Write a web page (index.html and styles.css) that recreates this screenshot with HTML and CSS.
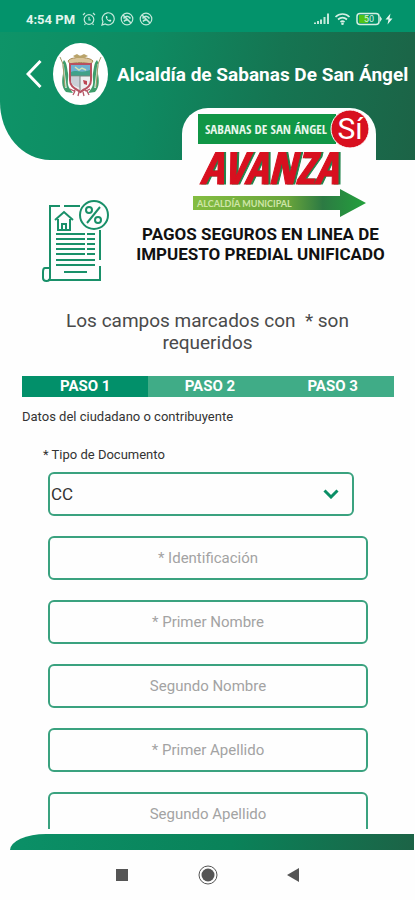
FILE: index.html
```html
<!DOCTYPE html>
<html lang="es">
<head>
    <meta charset="UTF-8" />
    <meta name="viewport" content="width=device-width, initial-scale=1" />
    <title>Alcaldía de Sabanas De San Ángel</title>
    <link rel="stylesheet" href="styles.css">
</head>
<body>
    <div class="status-bar">
        <span class="status-time">4:54 PM</span>
        <svg class="status-icon" viewBox="0 0 14 14">
            <circle cx="7" cy="7.5" r="4.8"/>
            <path d="M7 5v3h2M1 3l2-2M13 3l-2-2M3.500 11.500l-1 1.500M10.500 11.500l1 1.500"/>
        </svg>
        <svg class="status-icon" viewBox="0 0 14 14">
            <path d="M1 13l1-3.300A6 6 0 1 1 4.300 12z"/>
            <path d="M5 4c-1 2 2 6 5 5.500l.3-1.500-1.500-.6-.8.8C7 7.700 6.300 7 6 6.200l.6-.8L6 4z" fill="#d5efe4" stroke="none"/>
        </svg>
        <svg class="status-icon" viewBox="0 0 14 14">
            <circle cx="7" cy="7" r="5.800"/>
            <path d="M3 3l8 8M3.500 6.500c2-3 5-3 7 0M4 9.500c1-1.500 2-2 4-1.500" stroke-width="1.600"/>
        </svg>
        <svg class="status-icon" viewBox="0 0 14 14">
            <circle cx="7" cy="7" r="5.800"/>
            <path d="M3 3l8 8M3.500 6.500c2-3 5-3 7 0M4 9.500c1-1.500 2-2 4-1.500" stroke-width="1.600"/>
        </svg>
        <svg class="status-system" viewBox="0 0 82 14">
            <path d="M2 12v-1.500M5 12v-3M8 12V7.500M11.500 12V5M15 12V1.500" fill="none" stroke="#c3e8da" stroke-width="2"/>
            <g fill="none" stroke="#d5efe4" stroke-width="1.700">
                <path d="M22.500 5c4-4 10-4 14 0M25 7.500c3-2.600 6-2.600 9 0M27.500 10c1.500-1.200 2.500-1.200 4 0"/>
            </g>
            <circle cx="29.500" cy="11.700" r="1.300" fill="#d5efe4"/>
            <rect x="44" y="1.500" width="22" height="11" rx="3" fill="none" stroke="#d5efe4" stroke-width="1.500"/>
            <path d="M46 3h9v8h-9z" fill="#4fc417"/>
            <path d="M67 4l2 3-2 3z" fill="#d5efe4"/>
            <text x="51" y="10" class="battery-text">50</text>
            <path d="M77.500 1.500l-5 6h3l-1 5 5-6h-3z" fill="#e8f7f0"/>
        </svg>
    </div>

    <header class="header">
        <div class="title-bar">
            <button class="back" type="button" aria-label="Volver">
                <svg viewBox="0 0 16 30"><path d="M14.500 2L2 15l12.500 13"/></svg>
            </button>
            <svg class="crest" viewBox="0 0 55 62">
                <ellipse cx="27.500" cy="31" rx="27.500" ry="31" fill="#fff"/>
                <path d="M11 17c-3 5 0 9-1 14s-2 13 3 18l7 1-3-4c-4-5-1-11-2-16s-1-10-4-13z" fill="#3f9e6c"/>
                <path d="M44 17c3 5 0 9 1 14s2 13-3 18l-7 1 3-4c4-5 1-11 2-16s1-10 4-13z" fill="#3f9e6c"/>
                <path d="M10 21l3 24M45 21l-3 24" stroke="#d8efe3" stroke-width="1.500"/>
                <path d="M7 14l3 7 2 23M48 14l-3 7-2 23" fill="none" stroke="#a09a65"/>
                <path d="M15 18c3-4 8-2 12-5 4 3 9 1 13 5l-2 3c-8-2-14-2-21 0z" fill="#d9c49a" stroke="#a98a55"/>
                <path d="M20 13l4-2 3 2 4-2 4 2-4 2h-8z" fill="#b9a36a"/>
                <path d="M17 21h21v16c0 8-7 9-10.500 12C24 46 17 45 17 37z" fill="#edf0f1" stroke="#b8515f" stroke-width="2"/>
                <path d="M18 22h19v11H18z" fill="#6fb2d1"/>
                <path d="M18 29c5-3 9 2 19-2v6H18z" fill="#41a28a"/>
                <path d="M22 24l4 3 3-2 4 2" fill="none" stroke="#d2e4b4" stroke-width="1.500"/>
                <path d="M18 34h9v11c-5-2-9-3-9-8z" fill="#cad0d7"/>
                <path d="M27 33v14M18 33h19" stroke="#79857f"/>
                <path d="M30 37l4 1v4l-3-1z" fill="#bd4754"/>
                <path d="M17 46l4 2 2-2 4 3 4-3 2 2 4-2M22 48l-2 4M26 49l-1 4M30 49l1 4M34 48l2 4" fill="none" stroke="#b55867" stroke-width="1.300"/>
            </svg>
            <h1 class="app-title">Alcaldía de Sabanas De San Ángel</h1>
        </div>
        <div class="brand">
            <svg class="brand-logo" viewBox="0 0 194 112">
                <defs>
                    <linearGradient id="arrow" x1="0" x2="1">
                        <stop offset="0" stop-color="#84bd41"/>
                        <stop offset=".55" stop-color="#68a43b"/>
                        <stop offset=".75" stop-color="#2c7a43"/>
                        <stop offset="1" stop-color="#23a13c"/>
                    </linearGradient>
                </defs>
                <path d="M16 6h138v30H16z" fill="#109646"/>
                <text x="23" y="26" class="brand-town">SABANAS DE SAN ÁNGEL</text>
                <circle cx="168" cy="21" r="19" fill="#d8101f" stroke="#fff"/>
                <text x="168" y="31" class="brand-si">Sí</text>
                <text x="18" y="76" class="brand-name">AVANZA</text>
                <path d="M11 88h147v-7l26 14-26 14v-7H11z" fill="url(#arrow)"/>
                <text x="15" y="99" class="brand-office">ALCALDÍA MUNICIPAL</text>
            </svg>
        </div>
    </header>

    <main class="content">
        <section class="intro">
            <svg class="intro-icon" viewBox="0 0 68 84">
                <path d="M18 6H8v67M22 6h16M58 30v30M58 66v14H6M8 68H3c-2 0-2 2-2 4v6c0 4 7 4 7 0V68"/>
                <circle cx="52" cy="15" r="14"/>
                <path d="M45 23L58 7"/>
                <circle cx="47" cy="10" r="3"/>
                <circle cx="56" cy="20" r="3"/>
                <path d="M13 20l9-8 9 8M16 19v11h12V19M20 30v-6h4v6"/>
                <path d="M14 34h29M45 34h8M14 39h29M45 39h8M14 44h29M45 44h8M14 49h29M45 49h8M14 54h29M45 54h8M14 60h39M14 65h39M22 72h23"/>
            </svg>
            <h2 class="intro-title">PAGOS SEGUROS EN LINEA DE<br>IMPUESTO PREDIAL UNIFICADO</h2>
        </section>

        <p class="note">Los campos marcados con &nbsp;* son<br>requeridos</p>

        <ol class="steps">
            <li class="step active">PASO 1</li>
            <li class="step">PASO 2</li>
            <li class="step">PASO 3</li>
        </ol>

        <p class="section-title">Datos del ciudadano o contribuyente</p>

        <form class="form">
            <label class="label" for="tipo">* Tipo de Documento</label>
            <div class="select-container">
                <select class="field" id="tipo">
                    <option>CC</option>
                </select>
                <svg class="chevron" viewBox="0 0 16 10"><path d="M1.500 1.500L8 8l6.500-6.500"/></svg>
            </div>
            <input class="field" type="text" placeholder="* Identificación" aria-label="Identificación" />
            <input class="field" type="text" placeholder="* Primer Nombre" aria-label="Primer Nombre" />
            <input class="field" type="text" placeholder="Segundo Nombre" aria-label="Segundo Nombre" />
            <input class="field" type="text" placeholder="* Primer Apellido" aria-label="Primer Apellido" />
            <input class="field" type="text" placeholder="Segundo Apellido" aria-label="Segundo Apellido" />
        </form>
    </main>

    <footer class="footer"></footer>

    <nav class="nav-bar">
        <button class="nav-button" type="button" aria-label="Recientes">
            <svg viewBox="0 0 20 20"><path d="M4 4h12v12H4z"/></svg>
        </button>
        <button class="nav-button" type="button" aria-label="Inicio">
            <svg viewBox="0 0 20 20"><circle cx="10" cy="10" r="9" fill="none" stroke="#555"/><circle cx="10" cy="10" r="6.500"/></svg>
        </button>
        <button class="nav-button" type="button" aria-label="Atrás">
            <svg viewBox="0 0 20 20"><path d="M3 10l12-7v14z"/></svg>
        </button>
    </nav>
</body>
</html>
```

FILE: styles.css
```css
* {
    box-sizing: border-box;
}

body {
    margin: 0;
    height: 100vh;
    display: flex;
    flex-direction: column;
    background-color: #fefefe;
    color: #333;
    font-family: Roboto, "Liberation Sans", sans-serif;
}

button {
    padding: 0;
    border: none;
    background: none;
    cursor: pointer;
}

svg {
    display: block;
    flex-shrink: 0;
}

/* barra de estado */
.status-bar {
    display: flex;
    align-items: center;
    gap: 5px;
    height: 32px;
    padding: 6px 20px 0 26px;
    background-color: #03936b;
    flex-shrink: 0;
}

.status-time {
    margin-right: 2px;
    color: #e2f5ed;
    font-size: 13px;
    font-weight: 700;
}

.status-icon {
    width: 14px;
    height: 14px;
    fill: none;
    stroke: #c3e8da;
    stroke-width: 1.2;
}

.status-system {
    width: 82px;
    height: 14px;
    margin-left: auto;
}

.battery-text {
    fill: #d5efe4;
    font-size: 9px;
}

/* encabezado */
.header {
    display: flex;
    flex-direction: column;
    flex-shrink: 0;
    background: linear-gradient(100deg, #0e9468 0%, #0e8a61 35%, #157552 65%, #1c6346 100%);
    border-bottom-left-radius: 50px 58px;
}

.title-bar {
    display: flex;
    align-items: center;
    height: 76px;
    padding: 8px 8px 0 26px;
}

.back svg {
    width: 16px;
    height: 30px;
    fill: none;
    stroke: #fff;
    stroke-width: 3;
}

.crest {
    width: 55px;
    height: 62px;
    margin: 0 9px 0 11px;
}

.app-title {
    margin: 0;
    color: #fff;
    font-size: 19px;
    font-weight: 700;
    white-space: nowrap;
}

.brand {
    align-self: flex-end;
    width: 194px;
    height: 52px;
    margin-right: 39px;
    background-color: #fefefe;
    border-radius: 26px 26px 0 0;
}

.brand-logo {
    width: 194px;
    height: 112px;
}

.brand-town {
    fill: #e9f7ec;
    font-family: "Liberation Sans Narrow", "Open Sans Condensed", Roboto, sans-serif;
    font-size: 13px;
}

.brand-si {
    fill: #fff;
    font-size: 30px;
    text-anchor: middle;
}

.brand-name {
    fill: #d8101f;
    stroke: #d8101f;
    font-family: "Liberation Sans Narrow", "Open Sans Condensed", Roboto, sans-serif;
    font-size: 44px;
    font-style: italic;
    font-weight: 700;
    filter: drop-shadow(2px 0 0 #21834a);
}

.brand-office {
    fill: #cfe6a8;
    font-family: Lato, sans-serif;
    font-size: 9px;
    font-weight: 700;
}

/* contenido */
.content {
    flex: 1;
    min-height: 0;
    margin-bottom: 5px;
    padding-top: 40px;
    overflow-y: auto;
    scrollbar-width: none;
}

.intro {
    display: flex;
    align-items: flex-start;
    gap: 6px;
    padding: 0 10px 0 42px;
}

.intro-icon {
    width: 68px;
    height: 84px;
    fill: none;
    stroke: #199069;
    stroke-width: 2;
}

.intro-title {
    flex: 1;
    margin: 24px 0 0;
    color: #111;
    font-size: 17px;
    font-weight: 700;
    line-height: 20px;
    text-align: center;
    white-space: nowrap;
}

.note {
    margin: 26px 0 0;
    color: #4a4a4a;
    font-size: 19px;
    line-height: 22px;
    text-align: center;
}

.steps {
    display: flex;
    margin: 22px 21px 0 22px;
    padding: 0;
    list-style: none;
}

.step {
    flex: 1;
    background-color: #40ac87;
    color: #fff;
    font-size: 15px;
    font-weight: 700;
    line-height: 21px;
    text-align: center;
}

.step.active {
    flex: 0 0 34%;
    background-color: #02906a;
}

.section-title {
    margin: 11px 22px 0;
    font-size: 13px;
    line-height: 18px;
}

.form {
    display: flex;
    flex-direction: column;
    gap: 20px;
    margin: 20px 47px 0 48px;
}

.label {
    margin: 0 0 -12px -5px;
    font-size: 13px;
    line-height: 18px;
}

.field {
    width: 100%;
    height: 44px;
    flex-shrink: 0;
    padding: 0 8px;
    border: 2px solid #3aa27f;
    border-radius: 6px;
    background-color: #fefefe;
    color: #333;
    font-family: inherit;
    font-size: 15px;
    text-align: center;
}

.field::placeholder {
    color: #a3a3a3;
}

.select-container {
    display: grid;
    align-items: center;
    margin-right: 14px;
}

.select-container .field {
    grid-area: 1 / 1;
    padding: 0 1px;
    appearance: none;
    font-size: 17px;
    text-align: left;
}

.chevron {
    grid-area: 1 / 1;
    justify-self: end;
    width: 16px;
    height: 10px;
    margin-right: 15px;
    fill: none;
    stroke: #0b8f66;
    stroke-width: 3;
    pointer-events: none;
}

/* pie y navegación */
.footer {
    height: 16px;
    margin: 0 1px 0 10px;
    flex-shrink: 0;
    background: linear-gradient(100deg, #0b9067 0%, #0a8259 55%, #1c6346 100%);
    border-top-left-radius: 36px 16px;
}

.nav-bar {
    display: flex;
    justify-content: center;
    gap: 66px;
    height: 50px;
    flex-shrink: 0;
}

.nav-button svg {
    width: 20px;
    height: 20px;
    fill: #555;
}
```
